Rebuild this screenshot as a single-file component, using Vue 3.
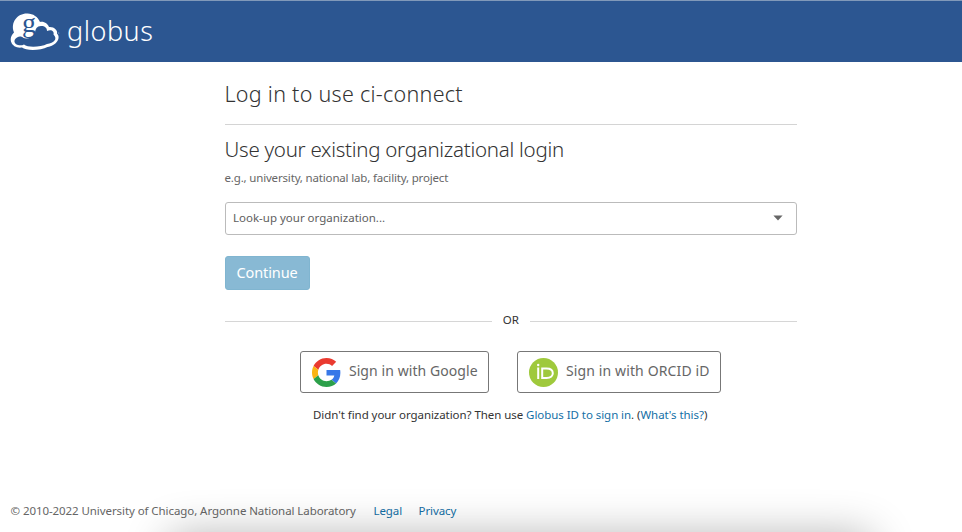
<script setup>
import { ref } from 'vue'

const placeholder = ref('Look-up your organization...')
</script>

<template>
  <div class="page">
    <header class="topbar">
      <svg class="cloud" width="50" height="38" viewBox="0 0 50 38" aria-hidden="true">
        <path fill="#fff" d="M4 19.5C0 9 8 0 17.5 .5C23 .5 28 4 30 9C34 8 38 11 39 14C44 13.5 48 17.5 47 20.5C51.5 25 46 33 37.5 34C31 37.500 16 38 12 34.500C2 36-3 26 4 19.5Z" />
        <path fill="#2c5691" d="M8 32C4 31 3 27 7 24.500C9.5 23 12 23.500 13.5 25C17 26.500 22 24.500 25 20.500C25 16 27 13 31 13C35 13 37 15 37 18C41 16 44.5 18 43.500 21.5C48 26 44 30 37 31C31 34 18 35 14 31.5C12 32.5 10 32.5 8 32Z" />
        <text x="12" y="19" class="cloud-g">g</text>
        <circle cx="48.7" cy="20" r=".6" fill="#a9bdd8" />
      </svg>
      <span class="wordmark">globus</span>
    </header>

    <main class="content">
      <h1 class="title">Log in to use ci-connect</h1>
      <h2 class="subtitle">Use your existing organizational login</h2>
      <p class="hint">e.g., university, national lab, facility, project</p>

      <div class="select" role="combobox">
        <span class="placeholder">{{ placeholder }}</span>
        <svg width="10" height="6" viewBox="0 0 10 6"><path d="M.4.4H9.6L5 5.4Z" fill="#666" /></svg>
      </div>

      <button class="continue"><span>Continue</span></button>

      <div class="divider"><span>OR</span></div>

      <div class="providers">
        <button class="provider google">
          <svg width="29" height="29" viewBox="0 0 48 48">
            <path fill="#ea3a30" d="M24 9.5c3.54 0 6.71 1.22 9.21 3.6l6.85-6.85C35.9 2.38 30.47 0 24 0 14.62 0 6.51 5.38 2.56 13.22l7.98 6.19C12.43 13.72 17.74 9.5 24 9.5z" />
            <path fill="#3878e8" d="M46.98 24.55c0-1.57-.15-3.09-.38-4.55H24v9.02h12.94c-.58 2.96-2.26 5.48-4.78 7.18l7.73 6c4.51-4.18 7.09-10.36 7.09-17.65z" />
            <path fill="#fbb414" d="M10.53 28.59c-.48-1.45-.76-2.99-.76-4.59s.27-3.14.76-4.59l-7.98-6.19C.92 16.46 0 20.12 0 24c0 3.88.92 7.54 2.56 10.78l7.97-6.19z" />
            <path fill="#2ca04a" d="M24 48c6.48 0 11.93-2.13 15.89-5.81l-7.73-6c-2.15 1.45-4.92 2.3-8.16 2.3-6.26 0-11.57-4.22-13.47-9.91l-7.98 6.19C6.51 42.62 14.62 48 24 48z" />
          </svg>
          <span>Sign in with Google</span>
        </button>
        <button class="provider orcid">
          <svg width="29" height="29" viewBox="0 0 29 29">
            <circle cx="14.5" cy="14.5" r="14.5" fill="#9fc93c" />
            <circle cx="9.2" cy="7" r="1.2" fill="#fff" />
            <path d="M9.2 9.5V21M13.2 10.6H17.5C22 10.6 23.8 13 23.8 15.3S22 20.1 17.5 20.1H13.2Z" fill="none" stroke="#fff" stroke-width="2" />
          </svg>
          <span>Sign in with ORCID iD</span>
        </button>
      </div>

      <p class="alternate">Didn't find your organization? Then use <a>Globus ID to sign in</a>. (<a>What's this?</a>)</p>
    </main>

    <footer class="footer">
      <span class="copyright">© 2010-2022 University of Chicago, Argonne National Laboratory</span>
      <a class="legal">Legal</a>
      <a class="privacy">Privacy</a>
    </footer>
    <div class="shade"></div>
  </div>
</template>

<style>
body { margin: 0; background: #fff; }
</style>

<style scoped>
* { box-sizing: border-box; }
.page {
  position: relative;
  width: 962px;
  height: 532px;
  overflow: hidden;
  display: flex;
  flex-direction: column;
  background: #fff;
  color: #333;
  font-family: "Noto Sans", sans-serif;
  font-weight: 300;
  white-space: nowrap;
}
.topbar {
  flex: none;
  display: flex;
  height: 62px;
  padding: 12px 0 0 10px;
  background: #2c5691;
  border-top: 1px solid #8199b9;
}
.cloud { flex: none; overflow: visible; }
.cloud-g { font: 28px "Liberation Serif", serif; fill: #2c5691; }
.wordmark {
  margin: -1px 0 0 7px;
  color: #fff;
  font-size: 27px;
  line-height: 38px;
  letter-spacing: .5px;
}
.content {
  display: flex;
  flex-direction: column;
  width: 572.5px;
  margin-left: 224.5px;
}
h1, h2, p { margin: 0; font-weight: 300; }
.title {
  height: 63px;
  padding-top: 16px;
  border-bottom: 1px solid #d4d4d4;
  font-size: 21.5px;
  line-height: 32px;
  letter-spacing: .28px;
}
.subtitle {
  margin-top: 8px;
  font-size: 20.5px;
  line-height: 32px;
  letter-spacing: -.27px;
}
.hint {
  margin-top: 4px;
  color: #666;
  font-size: 11.5px;
  font-weight: 400;
  line-height: 18px;
  letter-spacing: -.17px;
}
.select {
  display: flex;
  align-items: center;
  justify-content: space-between;
  height: 33px;
  margin-top: 15px;
  padding: 0 13px 2px 7.5px;
  border: 1px solid #bbb;
  border-radius: 3px;
  font-size: 11.5px;
  font-weight: 400;
  color: #606060;
}
button {
  display: flex;
  align-items: center;
  font: inherit;
  text-align: left;
  padding: 0;
}
.continue {
  width: 85px;
  height: 34px;
  margin-top: 21px;
  padding: 0 0 2px 11px;
  border: 1px solid #80b5d0;
  border-radius: 3px;
  background: #88b9d4;
  color: #fff;
  font-size: 14.5px;
  font-weight: 400;
  letter-spacing: -.1px;
}
.divider {
  display: flex;
  align-items: center;
  height: 20px;
  margin-top: 20px;
  font-size: 11.5px;
  font-weight: 400;
  gap: 11px;
}
.divider span { margin-top: -2px; }
.divider::before, .divider::after {
  content: "";
  flex: 1;
  height: 1px;
  margin-top: 3px;
  background: #d6d6d6;
}
.providers {
  display: flex;
  gap: 28px;
  margin: 21px 0 0 75.9px;
}
.provider {
  height: 42px;
  padding-left: 11px;
  gap: 7.5px;
  border: 1px solid #777;
  border-radius: 3px;
  background: #fff;
  color: #666;
  font-size: 14px;
  font-weight: 400;
  letter-spacing: .08px;
}
.provider span { margin-top: -3px; }
.google { width: 189px; }
.orcid { width: 204px; letter-spacing: .13px; }
.alternate {
  margin: 12px 0 0 88.5px;
  font-size: 11.5px;
  font-weight: 400;
  line-height: 20px;
  letter-spacing: -.055px;
}
a { color: #146fa6; }
.footer {
  display: flex;
  margin: auto 0 11px 10.5px;
  font-size: 11.5px;
  font-weight: 400;
  line-height: 20px;
  letter-spacing: -.075px;
  color: #666;
}
.copyright { width: 363px; }
.legal { width: 45px; }
.shade {
  position: absolute;
  left: 168px;
  top: 535px;
  width: 704px;
  height: 60px;
  border-radius: 10px;
  box-shadow: 0 0 44px rgba(0, 0, 0, .3);
}
</style>
